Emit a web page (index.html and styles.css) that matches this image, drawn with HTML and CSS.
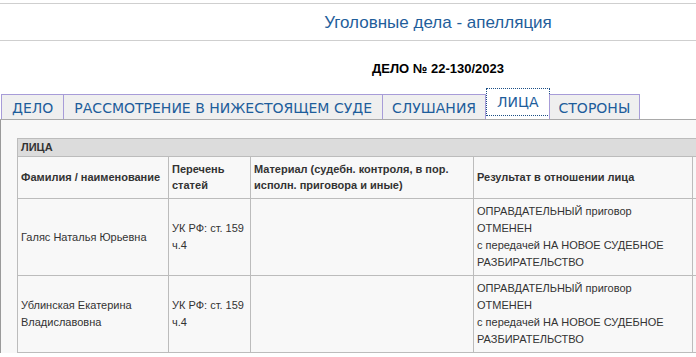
FILE: index.html
```html
<!DOCTYPE html>
<html lang="ru">
<head>
<meta charset="utf-8">
<title>Уголовные дела - апелляция</title>
<link rel="stylesheet" href="styles.css">
</head>
<body>
<div class="page">
  <div class="rule rule-top"></div>
  <h1 class="title">Уголовные дела - апелляция</h1>
  <div class="rule"></div>
  <div class="case-no">ДЕЛО № 22-130/2023</div>
  <ul class="tabs">
    <li class="tab"><span class="tab-link">ДЕЛО</span></li>
    <li class="tab"><span class="tab-link">РАССМОТРЕНИЕ В НИЖЕСТОЯЩЕМ СУДЕ</span></li>
    <li class="tab"><span class="tab-link tight">СЛУШАНИЯ</span></li>
    <li class="tab active"><span class="tab-link">ЛИЦА</span></li>
    <li class="tab"><span class="tab-link tight">СТОРОНЫ</span></li>
  </ul>
  <div class="panel">
    <table class="grid">
      <colgroup>
        <col class="c1"><col class="c2"><col class="c3"><col class="c4"><col class="c5">
      </colgroup>
      <tr class="caption-row"><th colspan="5">ЛИЦА</th></tr>
      <tr class="head-row">
        <th>Фамилия / наименование</th>
        <th>Перечень статей</th>
        <th>Материал (судебн. контроля, в пор. исполн. приговора и иные)</th>
        <th>Результат в отношении лица</th>
        <th>Дата вступления в силу</th>
      </tr>
      <tr>
        <td>Галяс Наталья Юрьевна</td>
        <td>УК РФ: ст. 159 ч.4</td>
        <td></td>
        <td>ОПРАВДАТЕЛЬНЫЙ приговор ОТМЕНЕН<br>с передачей НА НОВОЕ СУДЕБНОЕ РАЗБИРАТЕЛЬСТВО</td>
        <td></td>
      </tr>
      <tr>
        <td>Ублинская Екатерина Владиславовна</td>
        <td>УК РФ: ст. 159 ч.4</td>
        <td></td>
        <td>ОПРАВДАТЕЛЬНЫЙ приговор ОТМЕНЕН<br>с передачей НА НОВОЕ СУДЕБНОЕ РАЗБИРАТЕЛЬСТВО</td>
        <td></td>
      </tr>
    </table>
  </div>
</div>
</body>
</html>
```

FILE: styles.css
```css
html, body {
  margin: 0;
  padding: 0;
  overflow: hidden;
  background: #fff;
}
.page {
  width: 874px;
  padding-left: 1px;
  font-family: "Liberation Sans", Arial, sans-serif;
}
.rule {
  border-top: 1px solid #cfcfcf;
  margin-left: -1px;
}
.rule-top {
  margin-top: 3px;
}
.title {
  margin: 0;
  padding: 9px 0 8px;
  font-size: 17px;
  line-height: 19px;
  font-weight: normal;
  text-align: center;
  color: #1f5e9b;
}
.case-no {
  margin-top: 20px;
  font-size: 13px;
  line-height: 15px;
  font-weight: bold;
  text-align: center;
  color: #000;
}
.tabs {
  list-style: none;
  margin: 12px 0 0 -1px;
  padding: 0 0 0 1px;
  display: flex;
  align-items: flex-end;
  border-bottom: 1px solid #a9a9a9;
  font-family: "DejaVu Sans", Verdana, sans-serif;
  font-size: 14px;
}
.tab {
  height: 24px;
  border: 1px solid #a79cd8;
  border-bottom: none;
  background: #efefef;
  margin-left: -1px;
  display: flex;
}
.tab:first-child {
  margin-left: 0;
}
.tab-link {
  display: flex;
  align-items: center;
  padding: 2px 10px 0;
  color: #1d5d9b;
}
.tab-link.tight {
  padding: 2px 9px 0;
}
.tab.active {
  height: 31px;
  border: none;
  background: #fff;
  margin-left: 0;
  flex-direction: column;
}
.tab.active .tab-link {
  height: 26px;
  padding: 0 10px;
  border: 1px dotted #1c4f86;
}
.panel {
  border-left: 1px solid #9a9a9a;
  margin-left: -1px;
  background: #f8f8f8;
  padding: 18px 0 0 16px;
}
.grid {
  border-collapse: collapse;
  table-layout: fixed;
  width: 860px;
  font-size: 11px;
  color: #333;
}
.c1 { width: 151px; }
.c2 { width: 82px; }
.c3 { width: 223px; }
.c4 { width: 219px; }
.c5 { width: 185px; }
.grid th, .grid td {
  border: 1px solid #bcbcbc;
  padding: 4px 3px;
  line-height: 17px;
  vertical-align: middle;
  text-align: left;
}
.grid th {
  font-weight: bold;
  color: #333;
  line-height: 16px;
  padding: 4px 3px 5px;
}
.caption-row th {
  background: #dcdcdc;
  padding: 1px 3px;
  line-height: 15px;
}
.grid td {
  background: #f8f8f8;
}
```
